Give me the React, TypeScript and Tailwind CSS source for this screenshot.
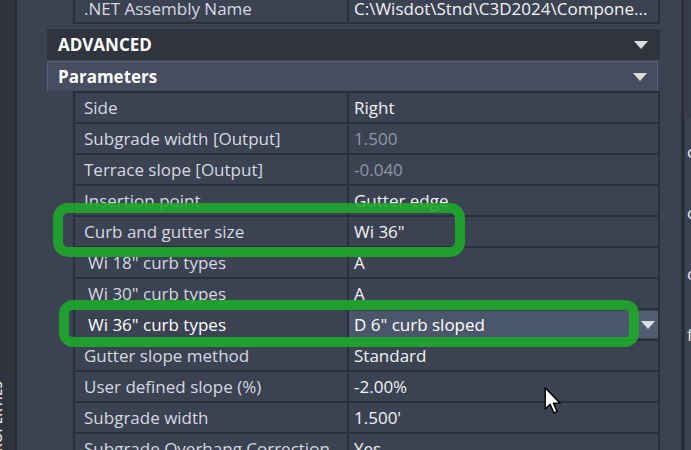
import React from 'react';

type Row = {
  label: string;
  value: string;
  indent?: boolean;
  muted?: boolean;
  selected?: boolean;
};

const rows: Row[] = [
  { label: 'Side', value: 'Right' },
  { label: 'Subgrade width [Output]', value: '1.500', muted: true },
  { label: 'Terrace slope [Output]', value: '-0.040', muted: true },
  { label: 'Insertion point', value: 'Gutter edge' },
  { label: 'Curb and gutter size', value: 'Wi 36"' },
  { label: 'Wi 18" curb types', value: 'A', indent: true },
  { label: 'Wi 30" curb types', value: 'A', indent: true },
  { label: 'Wi 36" curb types', value: 'D 6" curb sloped', indent: true, selected: true },
  { label: 'Gutter slope method', value: 'Standard' },
  { label: 'User defined slope (%)', value: '-2.00%' },
  { label: 'Subgrade width', value: "1.500'" },
  { label: 'Subgrade Overhang Correction', value: 'Yes' },
];

const Caret = ({ className = '' }: { className?: string }) => (
  <svg width="14" height="8" viewBox="0 0 14 8" className={className}>
    <polygon points="0,0 14,0 7,8" fill="#dcdde0" />
  </svg>
);

const Cursor = () => (
  <svg width="18" height="27" viewBox="0 0 12 19" className="absolute left-[544px] top-[387px]">
    <path d="M0.5 0.5 L0.5 15.5 L4 12.2 L6.6 18.3 L8.8 17.3 L6.3 11.4 L11 11.4 Z" fill="#ffffff" stroke="#000000" strokeWidth="1" strokeLinejoin="round" />
  </svg>
);

const PropRow = ({ row }: { row: Row }) => (
  <div className="flex h-[31px] shrink-0 border-b-2 border-[#2a2f39]">
    <div
      className={`flex w-[276px] items-center border-x-2 border-[#2a2f39] ${row.indent ? 'pl-[13px]' : 'pl-[9px]'} ${
        row.selected ? 'text-white' : 'text-[#d5d9e0]'
      }`}
    >
      {row.label}
    </div>
    {row.selected ? (
      <div className="flex w-[311px] border-r-2 border-[#2a2f39] pt-[1px] pb-[1px]">
        <div className="flex w-[287px] items-center bg-[#4c566a] pl-[5px] text-white">{row.value}</div>
        <div className="ml-[1px] flex w-[21px] items-center justify-center bg-[#535d71]">
          <Caret />
        </div>
      </div>
    ) : (
      <div
        className={`flex w-[311px] items-center border-r-2 border-[#2a2f39] pl-[5px] ${
          row.muted ? 'text-[#8e97a5]' : 'text-[#f2f3f5]'
        }`}
      >
        {row.value}
      </div>
    )}
  </div>
);

export default function App() {
  return (
    <div className="relative flex h-[450px] w-[691px] overflow-hidden bg-[#3b4251] font-['Open_Sans',sans-serif] text-[17px] leading-none">
      {/* left collapsed palette strip */}
      <div className="flex w-[17px] shrink-0 flex-col justify-end overflow-hidden border-r-2 border-[#262a33] bg-[#2e333d]">
        <div className="-ml-[9px] mb-[-10px] rotate-180 text-[13px] font-semibold tracking-wide text-[#e6e8ec] [writing-mode:vertical-rl]">
          PROPERTIES
        </div>
      </div>

      {/* main property grid */}
      <div className="flex w-[664px] shrink-0 flex-col">
        <div className="-mt-[6px] ml-[56px] flex h-[30px] w-[587px] shrink-0 border-b-2 border-[#2a2f39]">
          <div className="flex w-[276px] items-center border-x-2 border-[#2a2f39] pl-[9px] text-[#d5d9e0]">
            .NET Assembly Name
          </div>
          <div className="flex w-[311px] items-center border-r-2 border-[#2a2f39] pl-[5px] text-[#f2f3f5]">
            C:\Wisdot\Stnd\C3D2024\Compone...
          </div>
        </div>

        <div className="ml-[30px] mt-[5px] flex h-[31px] w-[613px] shrink-0 items-center justify-between bg-[#2f343f] pl-[11px] pr-[12px] font-bold text-white">
          <span>ADVANCED</span>
          <Caret />
        </div>

        <div className="ml-[30px] mt-[1px] flex h-[30px] w-[611px] shrink-0 items-center justify-between border-x border-t border-[#566074] bg-[#454d5f] pl-[10px] pr-[10px] font-bold text-white">
          <span>Parameters</span>
          <Caret />
        </div>

        <div className="ml-[56px] flex w-[587px] shrink-0 flex-col border-t-2 border-[#2a2f39]">
          {rows.map((r) => (
            <PropRow key={r.label} row={r} />
          ))}
        </div>
      </div>

      <div className="w-[3px] shrink-0 bg-[#2a2f39]" />

      {/* neighbouring panel, mostly cut off */}
      <div className="flex flex-1 flex-col overflow-hidden">
        <div className="h-[118px] shrink-0 bg-[#363c49]" />
        <div className="flex flex-1 flex-col border-l border-[#2a2f39] pl-[2px] pt-[3px] text-[17px] text-[#e6e8ec]">
          <div className="h-[61px] shrink-0 leading-[61px]">c</div>
          <div className="h-[61px] shrink-0 leading-[61px]">o</div>
          <div className="h-[61px] shrink-0 leading-[61px]">c</div>
          <div className="h-[61px] shrink-0 leading-[61px]">f</div>
        </div>
      </div>

      {/* green annotation highlights */}
      <div className="absolute left-[53px] top-[203px] h-[54px] w-[412px] rounded-[15px] border-[10px] border-[#1ea82a]/90" />
      <div className="absolute left-[59px] top-[300px] h-[47px] w-[580px] rounded-[14px] border-[10px] border-[#1ea82a]/90" />

      <Cursor />
    </div>
  );
}
